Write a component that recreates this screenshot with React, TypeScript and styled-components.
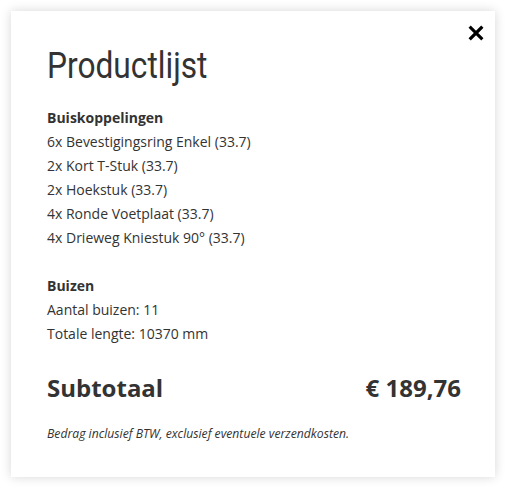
import React from "react";
import styled, { createGlobalStyle } from "styled-components";

const GlobalStyle = createGlobalStyle`
  html, body {
    margin: 0;
    padding: 0;
    background: #ffffff;
  }
  body {
    font-family: "Open Sans", "Liberation Sans", sans-serif;
    color: #333333;
  }
`;

// product lines shown in the modal
const couplings = [
  "6x Bevestigingsring Enkel (33.7)",
  "2x Kort T-Stuk (33.7)",
  "2x Hoekstuk (33.7)",
  "4x Ronde Voetplaat (33.7)",
  "4x Drieweg Kniestuk 90° (33.7)",
];

const tubes = ["Aantal buizen: 11", "Totale lengte: 10370 mm"];

function CloseIcon() {
  return (
    <svg width="16" height="16" viewBox="0 0 16 16">
      <path
        d="M2.8 2.8 L13.2 13.2 M13.2 2.8 L2.8 13.2"
        stroke="#000"
        strokeWidth="3.2"
        strokeLinecap="square"
        fill="none"
      />
    </svg>
  );
}

function App() {
  // display one group of products
  const displayGroup = (title: string, lines: string[], first?: boolean) => {
    return (
      <Group $first={first}>
        <GroupTitle>{title}</GroupTitle>
        {lines.map((line) => (
          <Line key={line}>{line}</Line>
        ))}
      </Group>
    );
  };

  /* ********** Main return statement of this component ********** */
  return (
    <>
      <GlobalStyle />
      <Modal>
        <CloseButton aria-label="Sluiten">
          <CloseIcon />
        </CloseButton>
        <Title>
          <span>Productlijst</span>
        </Title>
        {displayGroup("Buiskoppelingen", couplings, true)}
        {displayGroup("Buizen", tubes)}
        <TotalRow>
          <span>Subtotaal</span>
          <span>€ 189,76</span>
        </TotalRow>
        <Note>Bedrag inclusief BTW, exclusief eventuele verzendkosten.</Note>
      </Modal>
    </>
  );
}

export default App;

const Modal = styled.div`
  position: relative;
  box-sizing: border-box;
  width: 484px;
  margin: 11px;
  padding: 33px 34px 34px 36px;
  background: #ffffff;
  box-shadow: 0 0 10px rgba(0, 0, 0, 0.16);
`;

const CloseButton = styled.button`
  position: absolute;
  top: 14px;
  right: 11px;
  width: 16px;
  height: 16px;
  padding: 0;
  border: 0;
  background: none;
  cursor: pointer;
  svg {
    display: block;
  }
`;

const Title = styled.h1`
  margin: 0 0 18px;
  height: 44px;
  font-family: Roboto, "Liberation Sans", sans-serif;
  font-weight: 400;
  font-size: 36px;
  line-height: 44px;
  color: #333333;
  span {
    display: inline-block;
    transform: scaleX(0.88);
    transform-origin: left center;
  }
`;

const Group = styled.div<{ $first?: boolean }>`
  margin-top: ${(p) => (p.$first ? "0" : "24px")};
  font-size: 14px;
  line-height: 24px;
`;

const GroupTitle = styled.div`
  font-weight: 700;
`;

const Line = styled.div`
  font-weight: 400;
`;

const TotalRow = styled.div`
  display: flex;
  justify-content: space-between;
  align-items: center;
  margin-top: 26px;
  font-size: 24px;
  line-height: 32px;
  font-weight: 700;
  color: #333333;
`;

const Note = styled.p`
  margin: 21px 0 0;
  font-size: 12.2px;
  line-height: 18px;
  font-style: italic;
`;
